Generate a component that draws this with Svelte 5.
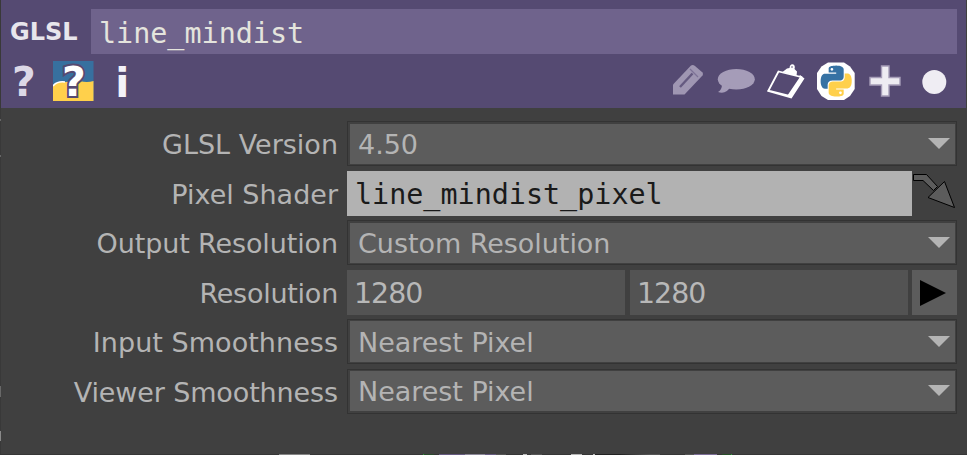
<script>
  const rows = [
    { label: 'GLSL Version', kind: 'menu', value: '4.50', gap: 0, pad: '2px 1px 1px 2px', spacing: 0 },
    { label: 'Pixel Shader', kind: 'ref', value: 'line_mindist_pixel', gap: 5, spacing: 0 },
    { label: 'Output Resolution', kind: 'menu', value: 'Custom Resolution', gap: 4, pad: '2px 1px 1px 2px', spacing: -0.12 },
    { label: 'Resolution', kind: 'pair', value: ['1280', '1280'], gap: 5, spacing: -0.25 },
    { label: 'Input Smoothness', kind: 'menu', value: 'Nearest Pixel', gap: 4, pad: '1px 1px 1px 2px', spacing: 0.04 },
    { label: 'Viewer Smoothness', kind: 'menu', value: 'Nearest Pixel', gap: 5, pad: '1px 1px 2px 2px', spacing: -0.12 }
  ];
</script>

<div class="window">
  <header>
    <div class="title">
      <span class="type">GLSL</span>
      <div class="name mono">line_mindist</div>
    </div>
    <div class="tools">
      <svg width="46" height="54" viewBox="7 54 46 54"><text x="12" y="96" class="glyph" fill="#dcd8e6">?</text></svg>
      <svg width="41" height="54" viewBox="53 54 41 54">
        <rect x="53" y="61" width="40.5" height="40" fill="#37709f" />
        <path d="M53 101V86Q57 81 65 82L80 81Q87 83 93.5 81V101Z" fill="#ffd04b" />
        <path d="M53 86Q57 81 65 82" fill="none" stroke="#fff" stroke-width="1.5" />
        <text x="62" y="96" class="glyph" fill="#fff" stroke="#554a72" stroke-width="4" paint-order="stroke">?</text>
      </svg>
      <svg width="50" height="54" viewBox="94 54 50 54"><text x="115.3" y="97" class="glyph" fill="#f4f2f8">i</text></svg>
      <span class="fill"></span>
      <svg width="50" height="54" viewBox="662 54 50 54">
        <path d="M673 94.5V84.5L691 65.5Q693 64.5 695 66L702.5 72.5Q703.5 74 702.5 75.5L684.5 94.5Z" fill="#9f96b2" />
        <path d="M680 87L692.5 73.5" fill="none" stroke="#655a80" stroke-width="2.4" />
        <path d="M690 69L698 77" fill="none" stroke="#7d7296" stroke-width="1.2" />
      </svg>
      <svg width="48" height="54" viewBox="712 54 48 54">
        <ellipse cx="736.3" cy="79.2" rx="18.5" ry="10.2" fill="#a59cb8" />
        <path d="M722 84Q722 90 718 92Q726 95 731 86Z" fill="#a59cb8" />
      </svg>
      <svg width="51" height="54" viewBox="760 54 51 54">
        <path d="M800 75L804.5 78.5L791.5 98.5L767 91.5L769.5 88.5L789 94.5Z" fill="#fff" />
        <path d="M778.5 71.5L768.5 90.5L788.5 95.5L801 77Z" fill="#554a72" stroke="#fff" stroke-width="1.8" />
        <path d="M782.5 72L787 68.5L789.5 68Q790 63.5 793.5 64.5Q795.5 66 794.5 69L797 71.5L796.5 76Z" fill="#fff" />
        <circle cx="792" cy="67" r=".8" fill="#554a72" />
      </svg>
      <svg width="50" height="54" viewBox="811 54 50 54">
        <path d="M828 62.5H844L850 66.5L854.7 73V89L850 96L844 100H828L821.5 96L817 89V73L821.5 66.5Z" fill="#fff" />
        <g transform="translate(820.7 65.6) scale(1.29)">
          <path fill="#3672a4" d="M14.25.18l.9.2.73.26.59.3.45.32.34.34.25.34.16.33.1.3.04.26.02.2-.01.13V8.5l-.05.63-.13.55-.21.46-.26.38-.3.31-.33.25-.35.19-.35.14-.33.1-.3.07-.26.04-.21.02H8.77l-.69.05-.59.14-.5.22-.41.27-.33.32-.27.35-.2.36-.15.37-.1.35-.07.32-.04.27-.02.21v3.06H3.17l-.21-.03-.28-.07-.32-.12-.35-.18-.36-.26-.36-.36-.35-.46-.32-.59-.28-.73-.21-.88-.14-1.05-.05-1.23.06-1.22.16-1.04.24-.87.32-.71.36-.57.4-.44.42-.33.42-.24.4-.16.36-.1.32-.05.24-.01h.16l.06.01h8.16v-.83H6.18l-.01-2.75-.02-.37.05-.34.11-.31.17-.28.25-.26.31-.23.38-.2.44-.18.51-.15.58-.12.64-.1.71-.06.77-.04.84-.02 1.27.05zm-6.3 1.98l-.23.33-.08.41.08.41.23.34.33.22.41.09.41-.09.33-.22.23-.34.08-.41-.08-.41-.23-.33-.33-.22-.41-.09-.41.09z" />
          <path fill="#ffd04b" d="M21.04 6.11l.28.06.32.12.35.18.36.27.36.35.35.47.32.59.28.73.21.88.14 1.04.05 1.23-.06 1.23-.16 1.04-.24.86-.32.71-.36.57-.4.45-.42.33-.42.24-.4.16-.36.09-.32.05-.24.02-.16-.01h-8.22v.82h5.84l.01 2.76.02.36-.05.34-.11.31-.17.29-.25.25-.31.24-.38.2-.44.17-.51.15-.58.13-.64.09-.71.07-.77.04-.84.01-1.27-.04-1.07-.14-.9-.2-.73-.25-.59-.3-.45-.33-.34-.34-.25-.34-.16-.33-.1-.3-.04-.25-.02-.2.01-.13v-5.34l.05-.64.13-.54.21-.46.26-.38.3-.32.33-.24.35-.2.35-.14.33-.1.3-.06.26-.04.21-.02.13-.01h5.84l.69-.05.59-.14.5-.21.41-.28.33-.32.27-.35.2-.36.15-.36.1-.35.07-.32.04-.28.02-.21V6.07h2.09l.14.01zm-6.47 14.25l-.23.33-.08.41.08.41.23.33.33.23.41.08.41-.08.33-.23.23-.33.08-.41-.08-.41-.23-.33-.33-.23-.41-.08-.41.08z" />
        </g>
      </svg>
      <svg width="48" height="54" viewBox="861 54 48 54">
        <path d="M881.5 66H889V77.5H900V85H889V96H881.5V85H870V77.5H881.5Z" fill="#eeecf2" stroke="#a69db8" stroke-width="1.4" />
      </svg>
      <svg width="48" height="54" viewBox="909 54 48 54"><circle cx="934.3" cy="82" r="12" fill="#efedf3" /></svg>
    </div>
  </header>

  <main>
    {#each rows as row}
      <div class="row" style="margin-top: {row.gap}px">
        <span class="label" style="letter-spacing: {row.spacing}px">{row.label}</span>
        {#if row.kind === 'menu'}
          <div class="menu" style="padding: {row.pad}">
            <div class="face">
              <span>{row.value}</span>
              <svg width="22" height="11" viewBox="0 0 22 11"><path d="M0 0H22L11 11Z" fill="#b4b4b4" /></svg>
            </div>
          </div>
        {:else if row.kind === 'ref'}
          <div class="ref mono">{row.value}</div>
          <svg width="45" height="45" viewBox="912 171 45 45">
            <path d="M913.5 174.5H926.5L937.5 186.5L933.5 190.5L923 180.5H913.5Z" fill="#5c5c5c" stroke="#000" />
            <path d="M944.5 181.5L954.5 207.5L928 197.5Z" fill="#5c5c5c" stroke="#000" />
          </svg>
        {:else}
          <div class="num">{row.value[0]}</div>
          <div class="num">{row.value[1]}</div>
          <div class="pulse">
            <svg width="45" height="45" viewBox="0 0 45 45"><path d="M8 10V36L34 23Z" fill="#000" /></svg>
          </div>
        {/if}
      </div>
    {/each}
  </main>
  <i class="edge left"></i>
  <i class="edge bottom"></i>
</div>

<style>
  :global(body) { margin: 0; background: #404040; }
  .window {
    position: relative;
    box-sizing: border-box;
    width: 967px;
    height: 455px;
    padding: 0 1px;
    background: #404040;
    overflow: hidden;
    font-family: "DejaVu Sans", Verdana, sans-serif;
  }
  .mono { font-family: "DejaVu Sans Mono", "Lucida Console", monospace; font-size: 28.4px; white-space: pre; }
  header { height: 108px; background: #554a72; box-sizing: border-box; padding-top: 9px; }
  .title { display: flex; height: 45px; padding-right: 9px; }
  .type { width: 81px; padding-left: 9px; box-sizing: content-box; font-weight: bold; font-size: 24px; line-height: 47px; color: #e8e6ec; letter-spacing: 0; }
  .name { flex: 1; background: #6f638c; color: #e4e4dd; padding-left: 8px; line-height: 49px; }
  .tools { display: flex; padding: 0 9px 0 6px; height: 54px; }
  .fill { flex: 1; }
  .glyph { font: bold 41px "DejaVu Sans", sans-serif; }
  svg { display: block; flex: none; }
  main { padding-top: 13px; }
  .row { display: flex; height: 45px; padding-right: 9px; }
  .label { width: 337px; margin-right: 9px; text-align: right; font-size: 27px; line-height: 47px; color: #b4b4b4; white-space: nowrap; }
  .menu { flex: 1; display: flex; box-sizing: border-box; border: 1px solid #333; }
  .face { flex: 1; display: flex; align-items: center; justify-content: space-between; background: #5c5c5c; padding: 0 5px 0 8px; font-size: 27px; line-height: 40px; color: #b4b4b4; }
  .face span { padding-top: 2px; line-height: 38px; letter-spacing: -0.04px; }
  .face svg { margin-top: -1px; }
  .ref { width: 557px; padding-left: 8px; background: #b2b2b2; color: #1a1a1a; line-height: 48px; }
  .num { width: 271px; padding-left: 7px; margin-right: 5px; background: #535353; color: #b8b8b8; font-size: 28.4px; letter-spacing: -0.95px; line-height: 47px; }
  .num + .num { margin-right: 4px; }
  .pulse { width: 45px; background: #5c5c5c; }
  .edge { position: absolute; }
  .left {
    left: 0; top: 0; width: 1px; height: 455px;
    background: linear-gradient(#393939 119px, #666 119px 121px, #393939 121px 155px, #666 155px 157px, #393939 157px 386px, #686868 386px 397px, #393939 397px 431px, #8a8a8a 431px 441px, #393939 441px);
  }
  .bottom {
    left: 0; bottom: 0; width: 967px; height: 1px;
    background: linear-gradient(90deg, #363636 279px, #858585 279px 310px, #363636 310px 423px, #2c9a36 423px 424px, #2a4a2c 424px 434px, #363636 434px 439px, #665a80 439px 465px, #8c8898 465px 485px, #665a80 485px 496px, #555 496px 506px, #363636 506px 523px, #bbb 523px 527px, #363636 527px 531px, #555 531px 542px, #363636 542px 571px, #b5b5b5 571px 582px, #363636 582px 593px, #bbb 593px 595px, #222 595px 620px, #555 650px 660px, #363636 660px 685px, #555 685px 694px, #7c6d96 694px 717px, #363636 717px 722px, #28502a 722px 731px, #2c9a36 731px 732px, #363636 732px);
  }
</style>
